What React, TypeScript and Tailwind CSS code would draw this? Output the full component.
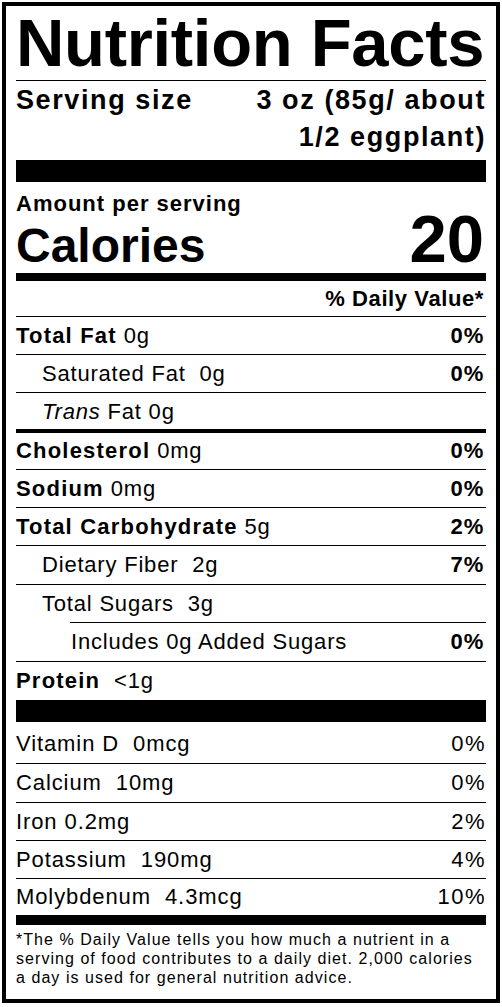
import React from "react";

interface NutrientRow {
  name: string;
  amount: string;
  pct?: string;
  indent?: boolean;
  bold?: boolean;
  italicName?: boolean;
  thick?: boolean;
  subLine?: boolean;
  h: string;
}

// heights include the top border (border-box)
const nutrients: NutrientRow[] = [
  { name: "Total Fat", amount: " 0g", pct: "0%", bold: true, h: "h-[38px]" },
  { name: "Saturated Fat", amount: "  0g", pct: "0%", indent: true, h: "h-[38px]" },
  { name: "Trans", amount: " Fat 0g", indent: true, italicName: true, h: "h-[37px]" },
  { name: "Cholesterol", amount: " 0mg", pct: "0%", bold: true, thick: true, h: "h-[40px]" },
  { name: "Sodium", amount: " 0mg", pct: "0%", bold: true, h: "h-[38px]" },
  { name: "Total Carbohydrate", amount: " 5g", pct: "2%", bold: true, h: "h-[38px]" },
  { name: "Dietary Fiber", amount: "  2g", pct: "7%", indent: true, h: "h-[39px]" },
  { name: "Total Sugars", amount: "  3g", indent: true, h: "h-[38px]" },
  { name: "Includes 0g Added Sugars", amount: "", pct: "0%", subLine: true, h: "h-[39px]" },
  { name: "Protein", amount: "  <1g", bold: true, h: "h-[39px]" },
];

const vitamins = [
  { name: "Vitamin D", amount: "0mcg", pct: "0%", h: "h-[41px] leading-[43px]", first: true },
  { name: "Calcium", amount: "10mg", pct: "0%", h: "h-[39px] leading-[38px]" },
  { name: "Iron", amount: "0.2mg", pct: "2%", h: "h-[38px] leading-[37px]", single: true },
  { name: "Potassium", amount: "190mg", pct: "4%", h: "h-[38px] leading-[37px]" },
  { name: "Molybdenum", amount: "4.3mcg", pct: "10%", h: "h-[37px] leading-[36px]" },
];

const Row = ({ row }: { row: NutrientRow }) => {
  const border = row.thick ? "border-t-4 leading-[36px]" : "border-t leading-[37px]";
  return (
    <div
      className={`${border} border-black ${row.subLine ? "ml-[54px]" : ""} flex justify-between text-[22px] tracking-[0.8px] ${row.h}`}
    >
      <span className={`whitespace-pre ${row.indent ? "pl-[26px]" : ""} ${row.subLine ? "pl-[1px]" : ""}`}>
        <span className={row.bold ? "font-bold tracking-[1.2px]" : row.italicName ? "italic" : ""}>
          {row.name}
        </span>
        {row.amount}
      </span>
      {row.pct && <span className="font-bold pr-[2px]">{row.pct}</span>}
    </div>
  );
};

export default function App() {
  return (
    <div className="min-h-screen bg-white pt-[2px] pl-[2px] text-black font-['Liberation_Sans',Arial,sans-serif]">
      <div className="w-[498px] border-4 border-black px-[10px] pt-[3px] pb-[12px]">
        <h1 className="text-[67px] leading-[67px] font-bold tracking-[-0.3px] whitespace-nowrap">
          Nutrition Facts
        </h1>
        <div className="mt-[4px] h-px bg-black" />

        <div className="pt-[1px] flex justify-between text-[27px] leading-[37px] font-bold tracking-[1.6px]">
          <span>Serving size</span>
          <span className="text-right">
            3 oz (85g/ about
            <br />
            1/2 eggplant)
          </span>
        </div>
        <div className="mt-[4px] h-[22px] bg-black" />

        <p className="mt-[11px] text-[22px] leading-[22px] font-bold tracking-[1px]">Amount per serving</p>
        <div className="flex justify-between items-baseline leading-[48px] font-bold">
          <span className="text-[48px]">Calories</span>
          <span className="text-[67px] pr-[2px]">20</span>
        </div>
        <div className="mt-[3px] h-[8px] bg-black" />

        <p className="pt-[7px] pb-[6px] text-right text-[22px] leading-[22px] font-bold tracking-[0.6px] pr-[2px]">
          % Daily Value*
        </p>

        {nutrients.map((row, index) => (
          <Row key={`nutrient-${index}`} row={row} />
        ))}

        <div className="h-[22px] bg-black" />

        {vitamins.map((v, index) => (
          <div
            key={`vitamin-${index}`}
            className={`${v.first ? "" : "border-t border-black"} flex justify-between text-[22px] tracking-[0.9px] ${v.h}`}
          >
            <span className="whitespace-pre">
              {v.name}
              {v.single ? " " : "  "}
              {v.amount}
            </span>
            <span className="tracking-[1.5px]">{v.pct}</span>
          </div>
        ))}

        <div className="h-[10px] bg-black" />

        <p className="pt-[5px] text-[16px] leading-[19px] tracking-[1.05px] whitespace-nowrap">
          *The % Daily Value tells you how much a nutrient in a
          <br />
          serving of food contributes to a daily diet. 2,000 calories
          <br />
          a day is used for general nutrition advice.
        </p>
      </div>
    </div>
  );
}
